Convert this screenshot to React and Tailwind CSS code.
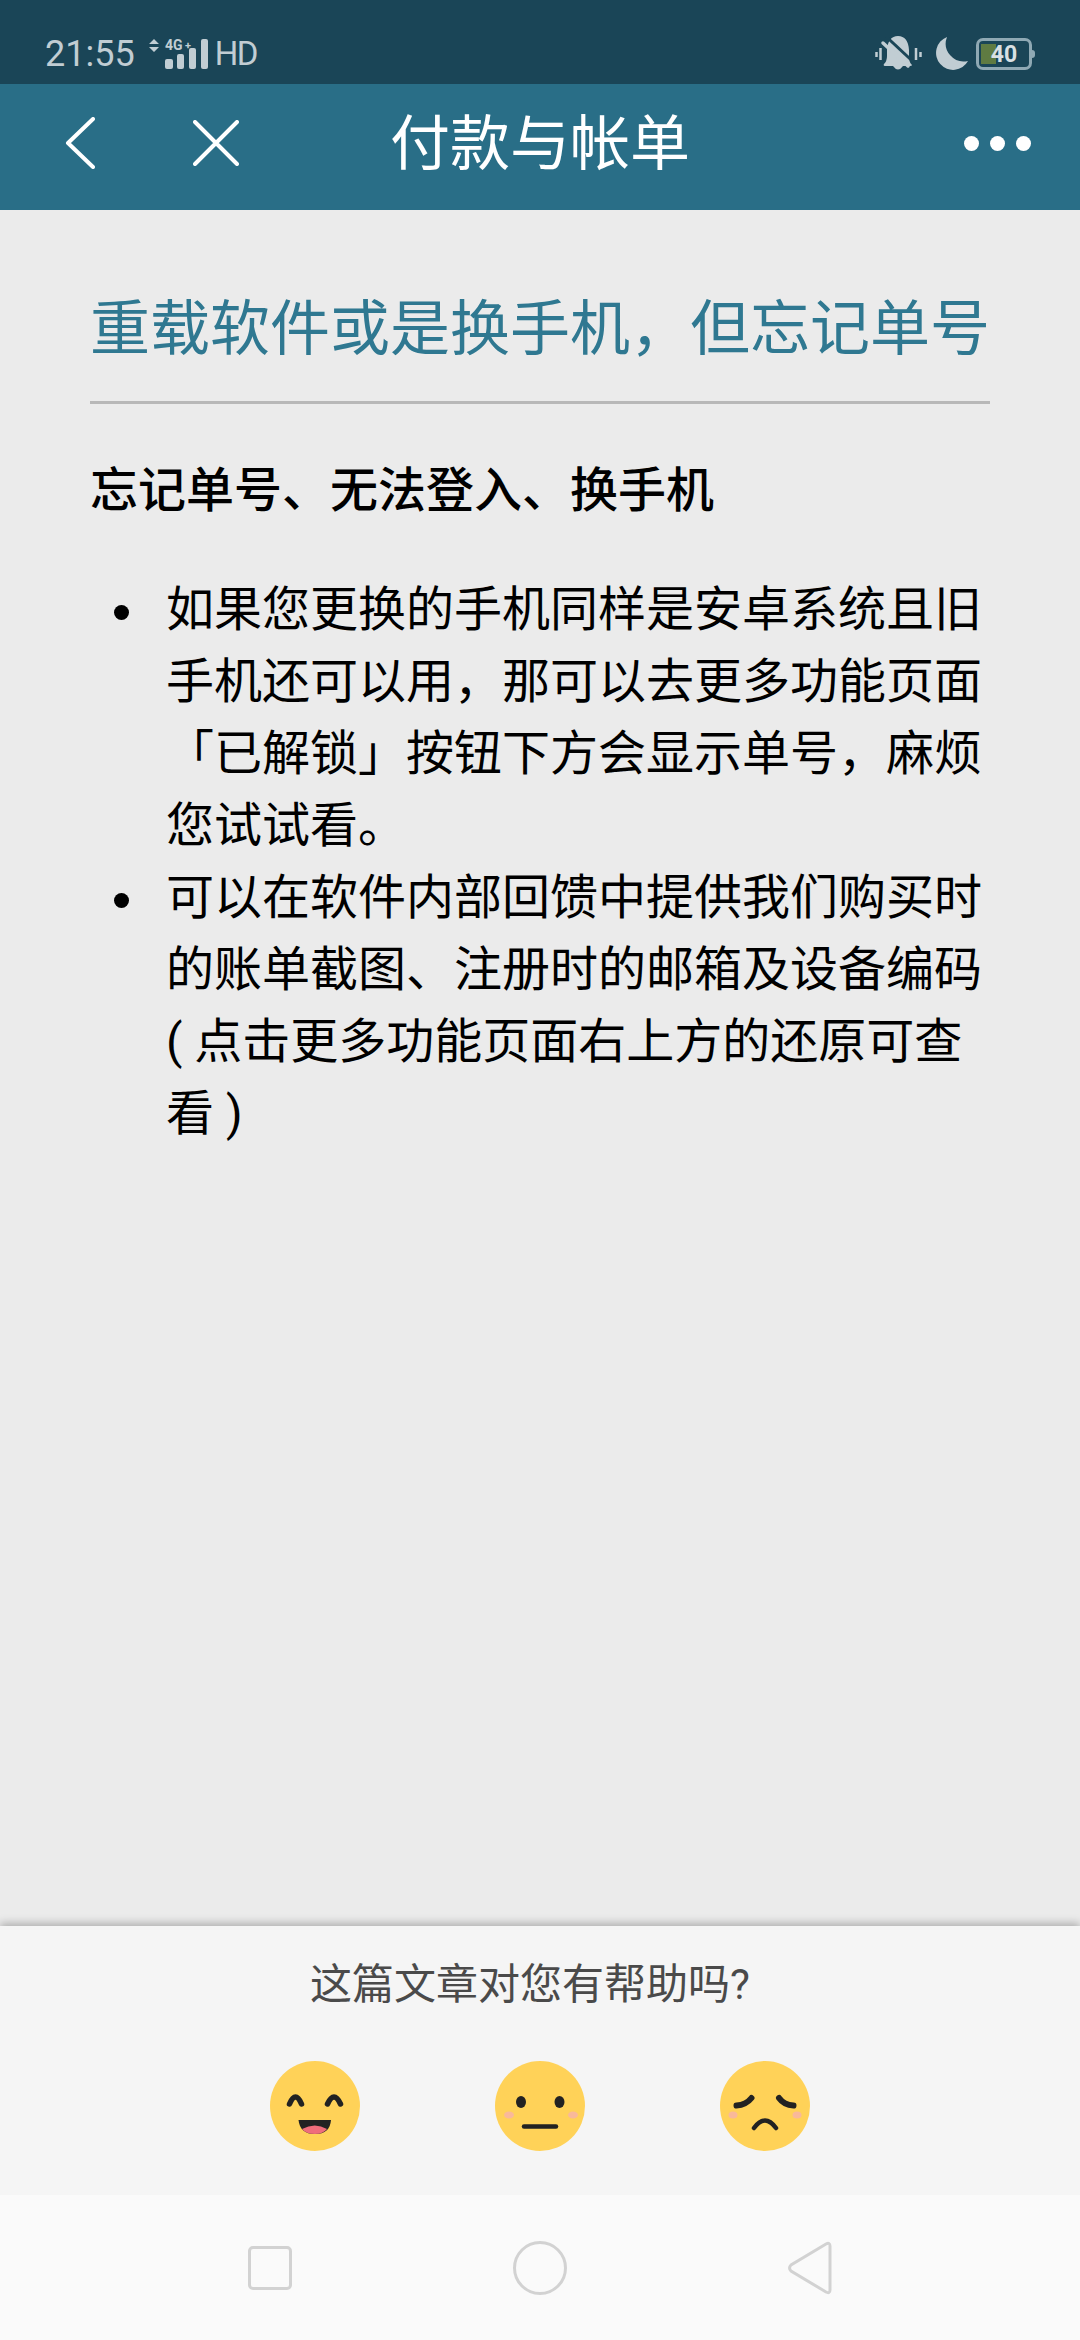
const cjk = "font-['Roboto','Noto_Sans_CJK_SC',sans-serif]";

function Face({ children }) {
  return (
    <svg width="90" height="90" viewBox="0 0 90 90">
      <circle cx="45" cy="45" r="45" fill="#ffd258" />
      {children}
    </svg>
  );
}

function Faces() {
  return (
    <div className="mt-[47px] flex justify-center gap-[135px]">
      <Face>
        <path d="M19.5 43 Q25.5 29 31.5 43" fill="none" stroke="#222" strokeWidth="5.5" strokeLinecap="round" />
        <path d="M57.5 43 Q64 29 70.5 43" fill="none" stroke="#222" strokeWidth="5.5" strokeLinecap="round" />
        <path d="M28.5 59 H61 Q60 73 45 73 Q30 73 28.5 59 Z" fill="#222" />
        <path d="M32 68 Q45 61 57 68 Q53 73 45 73 Q36 73 32 68 Z" fill="#ef6d7b" />
      </Face>
      <Face>
        <ellipse cx="26" cy="41" rx="5" ry="6" fill="#222" />
        <ellipse cx="64.5" cy="41" rx="5" ry="6" fill="#222" />
        <ellipse cx="14" cy="54" rx="5" ry="3.5" fill="#f9b99a" />
        <ellipse cx="78" cy="54" rx="5" ry="3.5" fill="#f9b99a" />
        <path d="M29 65.5 H61" fill="none" stroke="#222" strokeWidth="4.5" strokeLinecap="round" />
      </Face>
      <Face>
        <path d="M16.5 44.5 Q26 44 31.5 37" fill="none" stroke="#222" strokeWidth="6" strokeLinecap="round" />
        <path d="M59 37 Q64 44 73.5 44.5" fill="none" stroke="#222" strokeWidth="6" strokeLinecap="round" />
        <ellipse cx="13" cy="54" rx="4.5" ry="3.5" fill="#f9b99a" />
        <ellipse cx="77" cy="54" rx="4.5" ry="3.5" fill="#f9b99a" />
        <path d="M34 67 Q45 52 56 67" fill="none" stroke="#222" strokeWidth="4.5" strokeLinecap="round" />
      </Face>
    </div>
  );
}

function StatusBar() {
  return (
    <div className="flex h-[84px] items-center justify-between bg-[#1a4557] pl-[45px] pr-[45px] pt-[24px] text-[#c1cdd3]">
      <div className="flex items-center font-['Roboto',sans-serif]">
        <span className="text-[36px] leading-[40px]">21:55</span>
        <svg className="ml-[13px]" width="60" height="36" viewBox="0 0 60 36">
          <path d="M6 3 L11 8 H1 Z M6 16 L11 11 H1 Z" fill="currentColor" />
          <text x="17" y="14" fontSize="14" fontWeight="700" fill="currentColor" fontFamily="Roboto">4G</text>
          <text x="37" y="13" fontSize="11" fontWeight="700" fill="currentColor" fontFamily="Roboto">+</text>
          <rect x="17" y="23" width="8" height="10" rx="2" fill="currentColor" />
          <rect x="29" y="18" width="7" height="15" rx="2" fill="currentColor" />
          <rect x="41" y="12" width="7" height="21" rx="2" fill="currentColor" />
          <rect x="53" y="3" width="7" height="30" rx="2" fill="currentColor" />
        </svg>
        <span className="ml-[7px] text-[33px] leading-[40px] tracking-[-1.5px]">HD</span>
      </div>
      <div className="flex items-center">
        <svg width="48" height="36" viewBox="0 0 48 36">
          <path d="M23 0 Q33 0 34 14 V21 Q34 26 37 29 Q37 30 35 30 H28 Q23 37 18 30 H10 Q8 30 9 28 Q12 25 12 20 V14 Q13 0 23 0 Z" fill="currentColor" />
          <path d="M9 3 L38 30" stroke="#1a4557" strokeWidth="3" transform="translate(2 -2.5)" />
          <path d="M8 7 L33 30" stroke="currentColor" strokeWidth="3.5" strokeLinecap="round" />
          <path d="M1.5 16 V21 M5.5 12 V24 M41 12 V24 M45.5 16 V21" stroke="currentColor" strokeWidth="2.5" />
        </svg>
        <svg className="ml-[10px]" width="36" height="36" viewBox="0 0 36 36">
          <path d="M14 1 A17 17 0 1 0 35 25 A18 18 0 0 1 14 1 Z" fill="currentColor" />
        </svg>
        <div className="ml-[7px] flex items-center">
          <div className="relative flex h-[32px] w-[56px] items-center justify-center overflow-hidden rounded-[7px] border-[3px] border-[#8fa9b4]">
            <div className="absolute top-[3px] bottom-[3px] left-[2px] w-[15px] bg-[#5f7b42]" />
            <span className="relative text-[23px] leading-none font-bold text-[#d9e0e3]">40</span>
          </div>
          <div className="h-[8px] w-[3px] rounded-r bg-[#8fa9b4]" />
        </div>
      </div>
    </div>
  );
}

function Header() {
  return (
    <div className="flex h-[126px] items-center bg-[#296e87] pb-[8px] text-white">
      <svg className="ml-[65px]" width="30" height="52" viewBox="0 0 30 52">
        <path d="M28 2 L3 26 L28 50" fill="none" stroke="white" strokeWidth="4" strokeLinecap="round" strokeLinejoin="round" />
      </svg>
      <svg className="ml-[98px]" width="46" height="46" viewBox="0 0 46 46">
        <path d="M2 2 L44 44 M44 2 L2 44" fill="none" stroke="white" strokeWidth="4" strokeLinecap="round" />
      </svg>
      <h1 className="ml-[151px] mt-[4px] text-[60px] leading-none font-normal">付款与帐单</h1>
      <div className="ml-auto mr-[49px] flex gap-[11px]">
        <div className="h-[15px] w-[15px] rounded-full bg-white" />
        <div className="h-[15px] w-[15px] rounded-full bg-white" />
        <div className="h-[15px] w-[15px] rounded-full bg-white" />
      </div>
    </div>
  );
}

function Footer() {
  return (
    <div className="h-[269px] bg-[#f5f5f5] pt-[30px] shadow-[0_-3px_8px_rgba(0,0,0,0.25)]">
      <p className="pr-[20px] text-center text-[42px] leading-[58px] text-[#4a4a4a]">这篇文章对您有帮助吗?</p>
      <Faces />
    </div>
  );
}

function NavBar() {
  return (
    <div className="flex h-[145px] items-center bg-[#fafafa] pl-[248px]">
      <div className="h-[44px] w-[44px] rounded-[5px] border-[3px] border-[#d2d2d2]" />
      <div className="ml-[221px] h-[54px] w-[54px] rounded-full border-[3px] border-[#d2d2d2]" />
      <svg className="ml-[220px]" width="46" height="54" viewBox="0 0 46 54">
        <path d="M43 5 Q43 1 39 3 L4 24 Q1 27 4 30 L39 51 Q43 53 43 49 Z" fill="none" stroke="#d2d2d2" strokeWidth="3" />
      </svg>
    </div>
  );
}

export default function App() {
  return (
    <div className={`flex h-[2340px] w-[1080px] flex-col bg-[#ebebeb] ${cjk}`}>
      <StatusBar />
      <Header />
      <div className="flex-1 px-[90px] pt-[81px]">
        <h2 className="border-b-[3px] border-[#b8b8b8] pb-[32px] text-[60px] leading-[78px] font-normal text-[#2f7891]">
          {"重载软件或是换手机\uFF0C但忘记单号"}
        </h2>
        <p className="mt-[57px] text-[48px] leading-[60px] font-medium text-black">忘记单号、无法登入、换手机</p>
        <ul className="mt-[53px] w-[900px] list-none text-[48px] leading-[72px] text-black">
          <li className="relative pl-[76px]">
            <span className="absolute left-[24px] top-[31px] h-[15px] w-[15px] rounded-full bg-black" />
            {"如果您更换的手机同样是安卓系统且旧手机还可以用\uFF0C那可以去更多功能页面「已解锁」按钮下方会显示单号\uFF0C麻烦您试试看。"}
          </li>
          <li className="relative pl-[76px]">
            <span className="absolute left-[24px] top-[31px] h-[15px] w-[15px] rounded-full bg-black" />
            可以在软件内部回馈中提供我们购买时的账单截图、注册时的邮箱及设备编码 ( 点击更多功能页面右上方的还原可查看 )
          </li>
        </ul>
      </div>
      <Footer />
      <NavBar />
    </div>
  );
}
